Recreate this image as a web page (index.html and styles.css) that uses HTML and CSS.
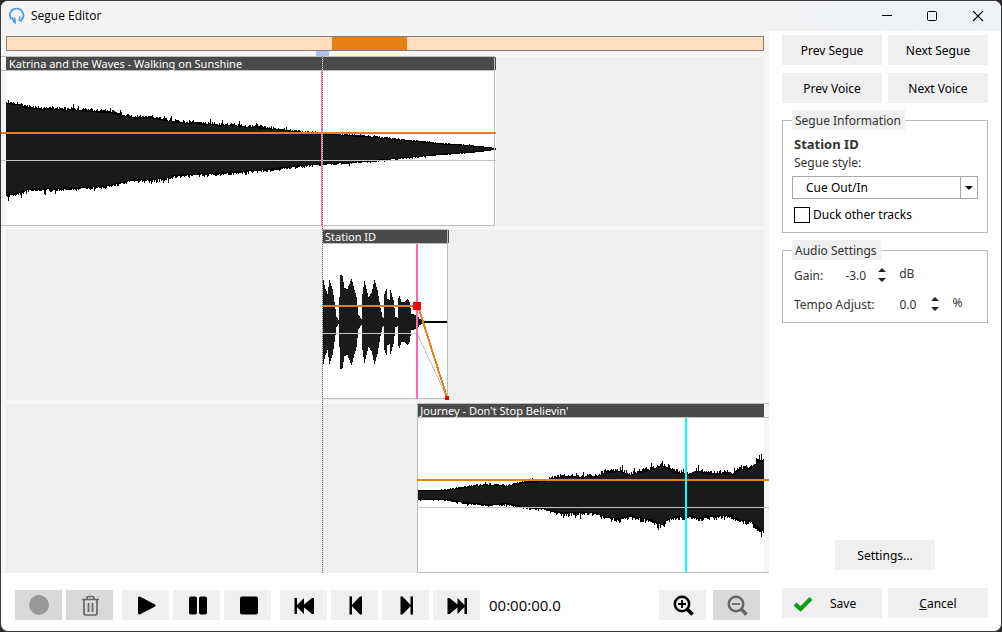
FILE: index.html
```html
<!DOCTYPE html>
<html lang="en">
<head>
<meta charset="utf-8">
<title>Segue Editor</title>
<link rel="stylesheet" href="styles.css">
</head>
<body>
<div class="window">
  <header class="titlebar">
    <svg class="logo" width="18" height="18" viewBox="0 0 18 18" fill="none" stroke="#4a9bd8" stroke-linecap="round"><path d="M2.600 11.500C.2 6 4 1.500 8.500 1.500S17 6 14.800 11.500" stroke-width="1.700"/><path d="M4 10.500l2 4.500M6.500 11l.8 5M14.300 11.500l-1.500 2.500M11.800 10l-.5 3.500" stroke-width="1.600"/></svg>
    <h1 class="title">Segue Editor</h1>
    <button class="caption" aria-label="Minimize"><svg width="12" height="12" viewBox="0 0 12 12"><path d="M2 4.500h10" stroke="#000"/></svg></button>
    <button class="caption" aria-label="Maximize"><svg width="12" height="12" viewBox="0 0 12 12"><rect x="1.500" y=".5" width="9" height="9" rx="1" fill="none" stroke="#000"/></svg></button>
    <button class="caption" aria-label="Close"><svg width="12" height="12" viewBox="0 0 12 12"><path d="M1 0l10 10M11 0L1 10" stroke="#000" stroke-width="1.100"/></svg></button>
  </header>
  <main class="content">
    <section class="editor">
      <div class="overview"><div class="overview-range"></div></div>
      <div class="timeline">
        <div class="lane"><svg class="wave" id="lane1" viewBox="0 0 768 170" preserveAspectRatio="none"></svg><div class="clip-title clip-first">Katrina and the Waves - Walking on Sunshine</div></div>
        <div class="lane"><svg class="wave" id="lane2" viewBox="0 0 768 170" preserveAspectRatio="none"></svg><div class="clip-title clip-second">Station ID</div></div>
        <div class="lane"><svg class="wave" id="lane3" viewBox="0 0 768 170" preserveAspectRatio="none"></svg><div class="clip-title clip-third">Journey - Don't Stop Believin'</div></div>
        <div class="playhead"></div>
      </div>
      <footer class="toolbar">
        <div class="group">
          <button class="tool" disabled aria-label="Record"><svg width="24" height="24" viewBox="0 0 24 24"><circle cx="12" cy="12" r="10" fill="#999"/></svg></button>
          <button class="tool" disabled aria-label="Delete"><svg width="24" height="24" viewBox="0 0 24 24" fill="none" stroke="#666" stroke-width="1.700"><path d="M4 6.500h17M9 6v-1q0-1.500 1.500-1.500h4q1.500 0 1.500 1.500v1M6 6.500v14q0 1.500 1.500 1.500h10q1.500 0 1.500-1.500V6.500M10.500 10v9M14.500 10v9"/></svg></button>
        </div>
        <div class="group">
          <button class="tool" aria-label="Play"><svg width="24" height="24" viewBox="0 0 24 24"><path d="M5.500 5v15l14.500-7.500z" stroke="#000" stroke-width="3" stroke-linejoin="round"/></svg></button>
          <button class="tool" aria-label="Pause"><svg width="24" height="24" viewBox="0 0 24 24"><rect x="4" y="3.500" width="8" height="18" rx="2"/><rect x="14" y="3.500" width="8" height="18" rx="2"/></svg></button>
          <button class="tool" aria-label="Stop"><svg width="24" height="24" viewBox="0 0 24 24"><rect x="4" y="3.500" width="18" height="18" rx="2"/></svg></button>
        </div>
        <div class="group">
          <button class="tool" aria-label="Go to start"><svg width="24" height="24" viewBox="0 0 24 24"><path d="M2.500 5H5v7l7-7v6.500L20 5h2v16h-2l-8-6.500V21l-7-7v7H2.500z"/></svg></button>
          <button class="tool" aria-label="Previous"><svg width="24" height="24" viewBox="0 0 24 24"><path d="M6.500 3.500H9v8.200L17 3.500h2v18h-2l-8-8.200v8.200H6.500z"/></svg></button>
          <button class="tool" aria-label="Next"><svg width="24" height="24" viewBox="0 0 24 24"><path d="M19 3.500h-2.500v8.200L8.500 3.500h-2v18h2l8-8.200v8.200H19z"/></svg></button>
          <button class="tool" aria-label="Go to end"><svg width="24" height="24" viewBox="0 0 24 24"><path d="M22 5h-2.500v7l-7-7v6.500L4.500 5h-2v16h2l8-6.500V21l7-7v7H22z"/></svg></button>
        </div>
        <output class="time">00:00:00.0</output>
        <div class="group zooms">
          <button class="tool" aria-label="Zoom in"><svg width="24" height="24" viewBox="0 0 24 24" fill="none" stroke="#000"><circle cx="11" cy="11" r="7.200" stroke-width="2.500"/><path d="M16.500 16.500l5 5" stroke-width="3.500"/><path d="M7 11h8M11 7v8" stroke-width="1.800"/></svg></button>
          <button class="tool" disabled aria-label="Zoom out"><svg width="24" height="24" viewBox="0 0 24 24" fill="none" stroke="#666"><circle cx="11" cy="11" r="7.200" stroke-width="2.500"/><path d="M16.500 16.500l5 5" stroke-width="3.500"/><path d="M7 11h8" stroke-width="1.800"/></svg></button>
        </div>
      </footer>
    </section>
    <aside class="side">
      <div class="pair">
        <button class="btn">Prev Segue</button><button class="btn">Next Segue</button>
        <button class="btn">Prev Voice</button><button class="btn">Next Voice</button>
      </div>
      <fieldset class="box info">
        <legend>Segue Information</legend>
        <div class="name">Station ID</div>
        <label class="style-label" for="style">Segue style:</label>
        <div class="combo">
          <select id="style"><option>Cue Out/In</option></select>
          <span class="combo-arrow"><svg width="8" height="4" viewBox="0 0 8 4"><path d="M0 0h8L4 4z"/></svg></span>
        </div>
        <label class="check"><input type="checkbox">Duck other tracks</label>
      </fieldset>
      <fieldset class="box audio">
        <legend>Audio Settings</legend>
        <div class="row">
          <label for="gain">Gain:</label><input id="gain" class="value gain" value="-3.0">
          <svg class="spin" width="8" height="14" viewBox="0 0 8 14"><path d="M0 4l4-4 4 4zM0 10l4 4 4-4z"/></svg><span class="unit">dB</span>
        </div>
        <div class="row">
          <label for="tempo">Tempo Adjust:</label><input id="tempo" class="value tempo" value="0.0">
          <svg class="spin spin-wide" width="8" height="14" viewBox="0 0 8 14"><path d="M0 4l4-4 4 4zM0 10l4 4 4-4z"/></svg><span class="unit">%</span>
        </div>
      </fieldset>
      <button class="btn settings">Settings...</button>
      <div class="pair">
        <button class="btn save"><svg width="20" height="16" viewBox="0 0 20 16"><path d="M2 8l5.500 5L18 2.500" fill="none" stroke="#0a9d14" stroke-width="4"/></svg>Save</button>
        <button class="btn"><u>C</u>ancel</button>
      </div>
    </aside>
  </main>
</div>
<script src="waves.js"></script>
</body>
</html>
```

FILE: styles.css
```css
* { box-sizing: border-box; }
body {
  margin: 0;
  background: #2b2b2e;
  font: 12px/18px "Noto Sans", "Open Sans", sans-serif;
  color: #000;
}
button, input, select { font: inherit; color: inherit; }
.window {
  min-height: 100vh;
  display: flex;
  flex-direction: column;
  border: 1px solid #3a3a3d;
  border-radius: 8px;
  overflow: hidden;
  background: #fff;
}
.titlebar {
  height: 30px;
  display: flex;
  align-items: center;
  padding-left: 7px;
  background: linear-gradient(90deg, #f3f3f3 60%, #eff3f7);
}
.logo { margin-right: 5px; }
.title { margin: 0; flex: 1; font: 400 12px/18px "Open Sans", sans-serif; }
.caption {
  width: 46px;
  height: 30px;
  padding: 0;
  border: 0;
  background: none;
}
.caption svg { vertical-align: middle; }
.content { flex: 1; display: flex; }
.editor { flex: 1; display: flex; flex-direction: column; }
.overview {
  height: 25px;
  padding: 5px 5px;
  background: #f5f5f5;
  display: flex;
  position: relative;
}
.overview::before {
  content: "";
  flex: 1;
  border: 1px solid #808080;
  background: #ffdfbf;
}
.overview-range {
  position: absolute;
  left: 43.1%;
  width: 9.8%;
  top: 6px;
  height: 13px;
  background: #e58017;
}
.overview::after {
  content: "";
  position: absolute;
  left: 41%;
  top: 20px;
  width: 13px;
  height: 5px;
  background: #aac4f0;
}
.timeline {
  flex: 1;
  display: flex;
  flex-direction: column;
  gap: 3px;
  position: relative;
  background: #f5f5f5;
}
.lane {
  flex: 1;
  position: relative;
  background: linear-gradient(#efefef, #efefef) 5px 1px / calc(100% - 10px) 100% no-repeat;
}
.wave { position: absolute; inset: 0; width: 100%; height: 100%; }
.clip-title {
  position: absolute;
  top: 1px;
  padding-left: 3px;
  font-size: 11px;
  line-height: 14px;
  color: #fff;
  white-space: nowrap;
}
.clip-first { left: 5px; }
.clip-second { left: 41.8%; }
.clip-third { left: 54.2%; }
.playhead {
  position: absolute;
  left: 41.8%;
  top: 0;
  bottom: 0;
  width: 1px;
  background: repeating-linear-gradient(#707070 0 1px, #d8d8d8 1px 2px);
}
.toolbar {
  height: 58px;
  display: flex;
  align-items: center;
  gap: 9px;
  padding: 5px 9px 0 14px;
}
.group { display: flex; gap: 4px; }
.tool {
  width: 47px;
  height: 30px;
  padding: 0;
  border: 0;
  background: #efefef;
}
.tool:disabled { background: #d9d9d9; }
.tool svg { display: block; margin: auto; }
.time { font: 15px/20px "Open Sans", sans-serif; }
.zooms { margin-left: auto; gap: 7px; }
.side {
  width: 232px;
  display: flex;
  flex-direction: column;
  padding: 4px 13px 13px 13px;
}
.pair { display: grid; grid-template-columns: 1fr 1fr; gap: 8px 6px; }
.btn {
  height: 30px;
  padding: 2px 0 0;
  border: 0;
  background: #efefef;
}
.box {
  margin: 7px 0 0;
  padding: 0 9px;
  border: 1px solid #b9b9b9;
  color: #333;
}
.box legend { height: 20px; padding: 0 4px 0 3px; line-height: 22px; background: #efefef; }
.info { height: 123px; }
.name { padding: 5px 2px 0; font-weight: 700; font-size: 13px; }
.style-label { display: block; padding: 1px 2px 0; }
.combo { display: flex; height: 23px; margin-top: 4px; border: 1px solid #a8a8a8; color: #000; }
.combo select { flex: 1; appearance: none; border: 0; padding: 0 13px; background: #fff; }
.combo-arrow { width: 17px; display: grid; place-items: center; border-left: 1px solid #a8a8a8; }
.check { display: flex; align-items: center; gap: 3px; margin-top: 7px; padding-left: 2px; color: #000; }
.check input { appearance: none; margin: 0; width: 16px; height: 16px; border: 1px solid #000; background: #fff; }
.audio { height: 83px; }
.row { display: flex; align-items: center; height: 29px; padding-left: 2px; }
.row label, .value { padding: 2px 0 0; }
.value { border: 0; text-align: right; background: none; }
.gain { width: 43px; }
.tempo { width: 42px; }
.spin { margin: 0 13px 0 12px; fill: #222; }
.spin-wide { margin-left: 15px; }
.unit { padding-bottom: 2px; }
.settings { width: 100px; margin: auto auto 18px; }
.save { display: flex; align-items: center; gap: 17px; padding-left: 11px; }
```

FILE: waves.js
```js
const envelopes = {
  lane1: { mid: 93, pts: [[5,48],[16,46],[27,42],[59,41],[79,40],[109,38],[129,33],[156,32],[176,28],[229,25],[266,22],[309,17],[321,16],[359,14],[399,10],[439,6],[469,4],[495,1]] },
  lane2: { mid: 93, pts: [[321,46],[324,33],[326,28],[328,42],[331,33],[333,20],[335,5],[337,2],[338,25],[339,47],[341,46],[343,34],[346,33],[350,43],[352,36],[355,25],[357,7],[360,3],[361,28],[363,41],[367,25],[370,29],[373,42],[376,32],[379,14],[381,5],[382,4],[383,28],[385,33],[386,23],[388,22],[389,32],[392,22],[394,5],[396,4],[397,24],[398,26],[400,20],[403,20],[406,23],[408,20],[410,8],[414,7],[416,6],[418,3],[421,2],[422,1],[447,1]] },
  lane3: { mid: 92, pts: [[417,5],[439,5],[454,7],[466,9],[486,11],[506,10],[516,12],[524,14],[542,15],[556,19],[569,20],[582,19],[596,20],[601,23],[609,25],[619,26],[629,22],[639,25],[649,27],[661,32],[666,27],[674,24],[684,24],[689,22],[697,26],[706,23],[732,23],[739,28],[749,28],[756,35],[763,37]] }
};

const random = seed => () => (seed = (seed * 16807) % 2147483647) / 2147483647;

function wave({ mid, pts }, noise) {
  const rnd = random(77);
  let outer = "", inner = "";
  for (let i = 0; i < pts.length - 1; i++) {
    const [x0, a0] = pts[i], [x1, a1] = pts[i + 1];
    for (let x = x0; x < x1; x++) {
      const a = a0 + (a1 - a0) * (x - x0) / (x1 - x0);
      const scale = noise * Math.min(1, a / 25);
      const jitter = () => scale * (rnd() * 2 - 1 + (rnd() > 0.93 ? 3 * rnd() : 0));
      const up = Math.max(1, Math.round(a + jitter()));
      const down = Math.max(1, Math.round(a + jitter()));
      outer += `M${x} ${mid - up}h1v${up + down}h-1z`;
      const body = Math.round(a - scale - 1);
      if (body > 0) inner += `M${x} ${mid - body}h1v${body * 2}h-1z`;
    }
  }
  return `<path d="${outer}"/><path fill="#1a1a1a" d="${inner}"/>`;
}

const rect = (x, y, w, h, fill) => `<rect x="${x}" y="${y}" width="${w}" height="${h}" fill="${fill}"/>`;
const grey = "#bdbdbd", orange = "#e58017", pink = "#ff69b4", header = "#4a4a4a";

const drawings = {
  lane1: w => rect(5, 0, 490, 171, "#fff") + rect(5, 1, 490, 13, header) + w +
    rect(0, 0, 494, 1, grey) + rect(0, 14, 494, 1, grey) + rect(0, 169, 494, 1, grey) +
    rect(493, 0, 1, 170, grey) + rect(0, 104, 495, 1, "#c4c4c4") + rect(0, 76, 495, 2, orange) +
    rect(320, 15, 1, 155, pink),
  lane2: w => rect(321, 0, 127, 170, "#fff") + rect(447, 0, 1, 170, "#efefef") + rect(321, 1, 127, 13, header) + w +
    rect(321, 0, 126, 1, grey) + rect(321, 14, 126, 1, grey) + rect(321, 169, 126, 1, grey) +
    rect(446, 0, 1, 170, grey) + rect(321, 104, 95, 1, "#c4c4c4") +
    `<path d="M416 104L446 168" stroke="#c4c4c4"/>` + rect(415, 15, 2, 155, pink) +
    rect(321, 76, 95, 2, orange) + `<path d="M417 77L446 168" stroke="${orange}" stroke-width="2"/>` +
    rect(412, 73, 8, 8, "#f00") + rect(444, 167, 4, 4, "#f00"),
  lane3: w => rect(416, 0, 347, 170, "#fff") + rect(417, 1, 346, 13, header) + w +
    rect(416, 0, 352, 1, grey) + rect(416, 14, 352, 1, grey) + rect(416, 169, 352, 1, grey) +
    rect(416, 0, 1, 170, grey) + rect(416, 104, 352, 1, "#c4c4c4") + rect(416, 76, 352, 2, orange) +
    rect(684, 15, 2, 154, "#0ff")
};

for (const id in drawings) {
  const noise = { lane1: 1.4, lane2: 0, lane3: 2 }[id];
  document.getElementById(id).innerHTML =
    `<g shape-rendering="crispEdges">${drawings[id](wave(envelopes[id], noise))}</g>`;
}
```
